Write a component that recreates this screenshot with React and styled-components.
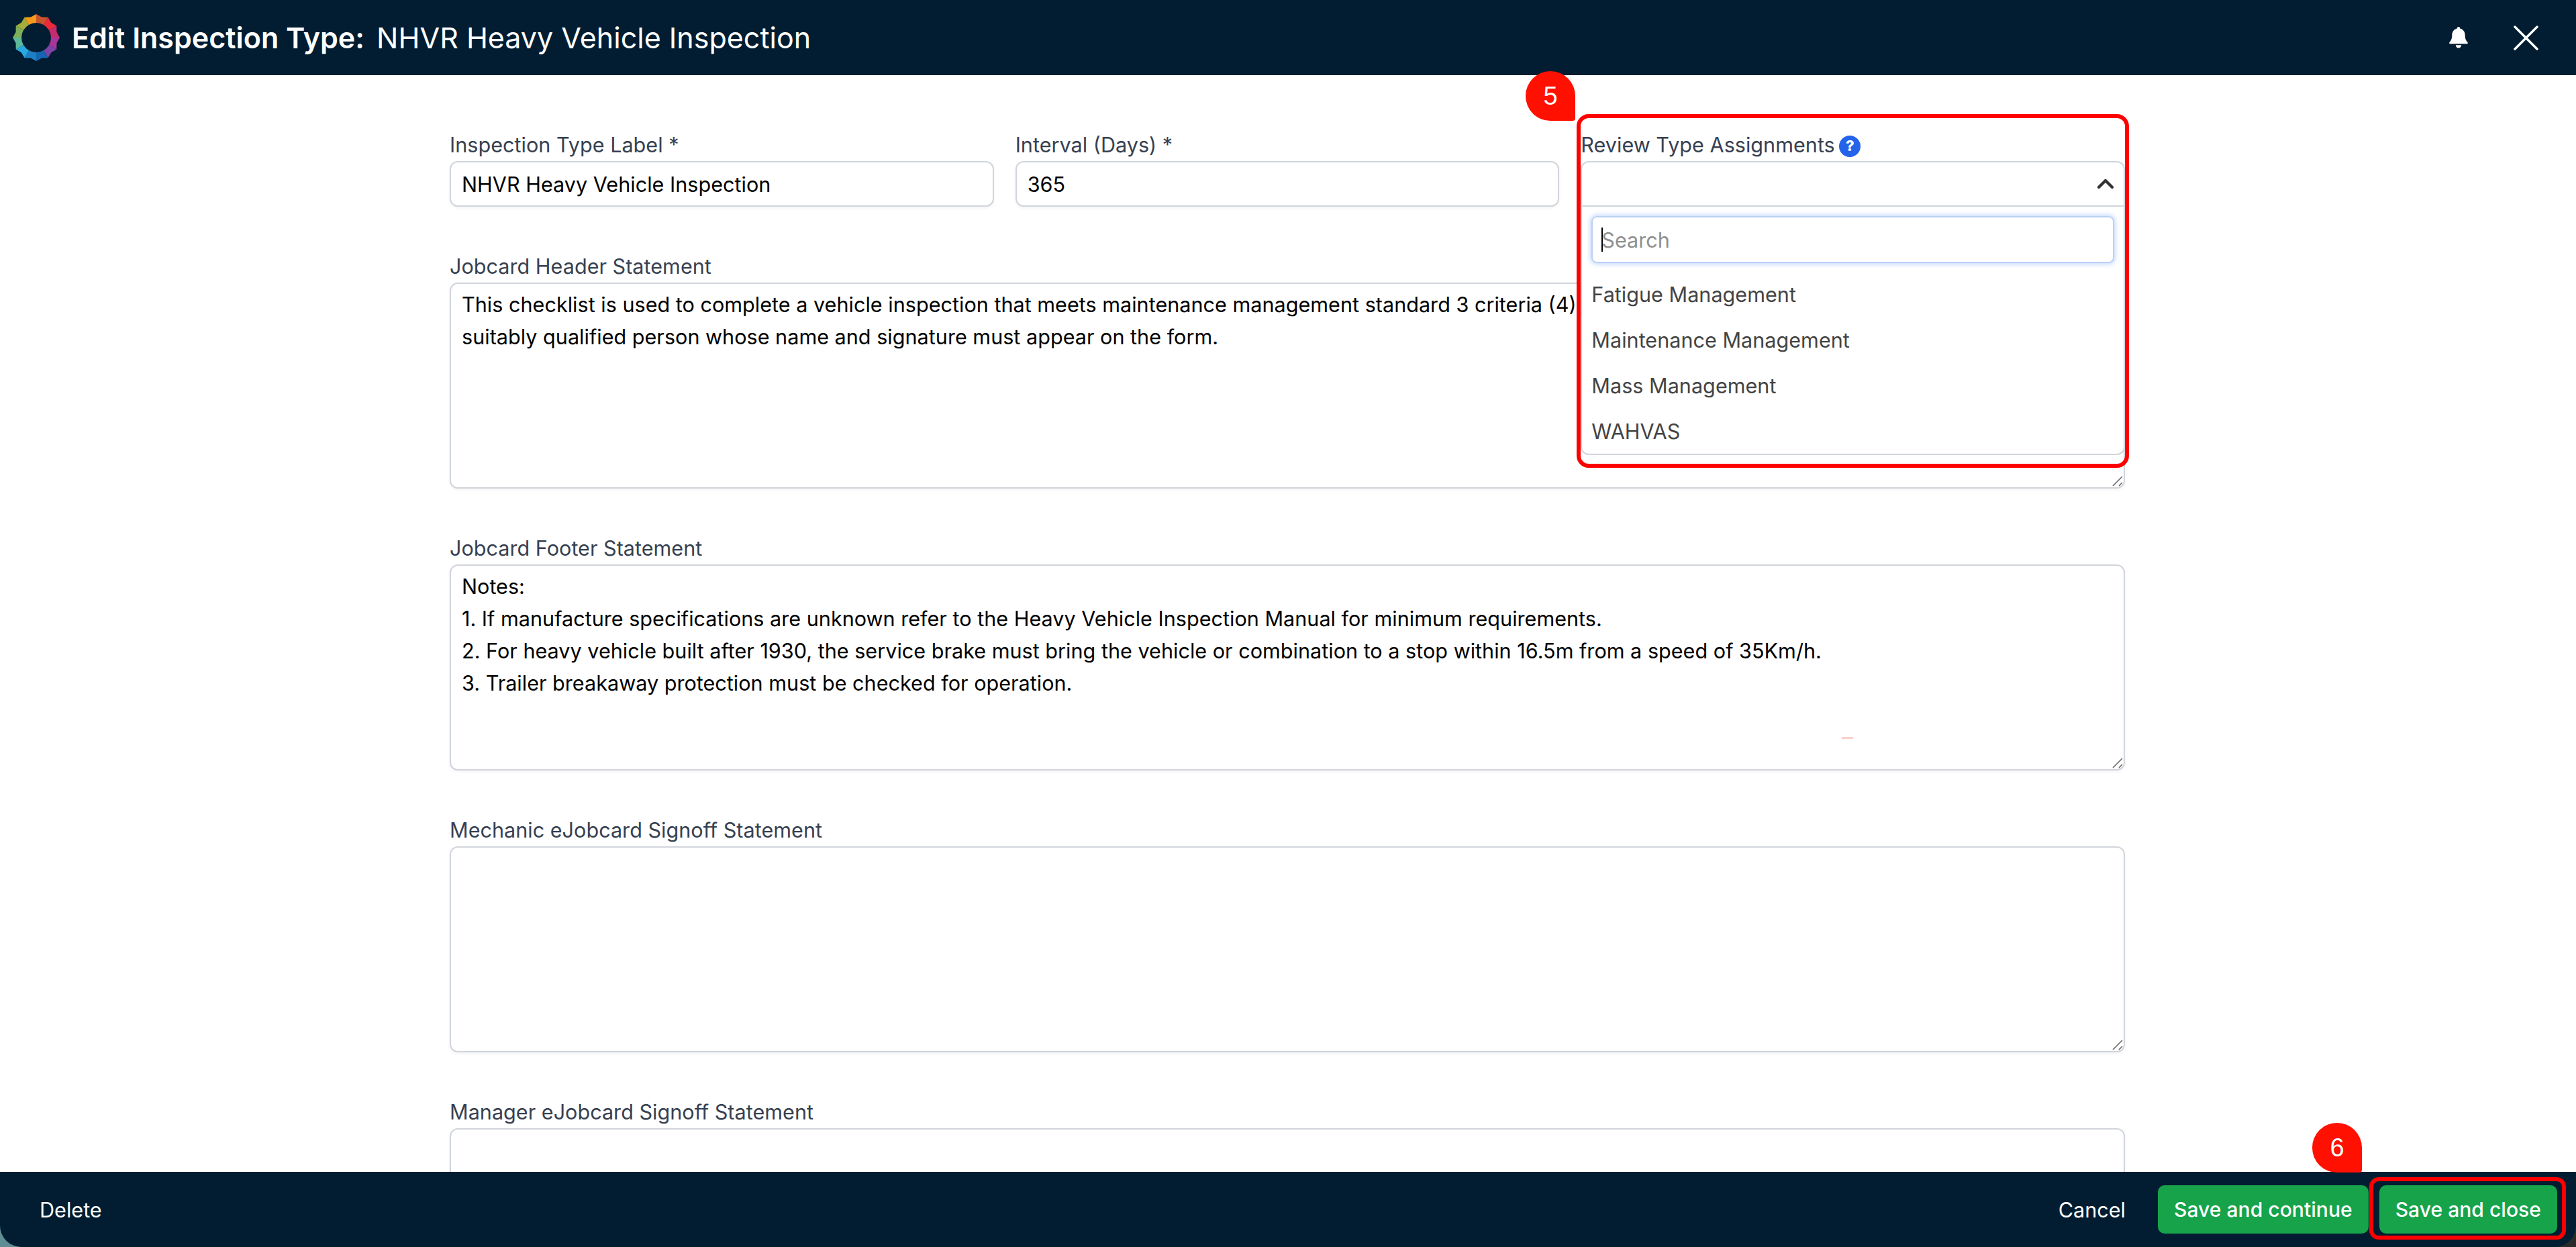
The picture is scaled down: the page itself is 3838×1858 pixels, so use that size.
import React from "react";
import styled, { createGlobalStyle } from "styled-components";
import { ChevronUp } from "lucide-react";

const FONT = `Inter, "Liberation Sans", sans-serif`;

const GlobalStyle = createGlobalStyle`
	html, body {
		margin: 0;
		padding: 0;
		height: 100%;
		background: linear-gradient(90deg, #5f8d94 0%, #2a2a2a 100%);
		font-family: ${FONT};
	}
	#root {
		height: 100%;
	}
	* {
		box-sizing: border-box;
	}
`;

const LOGO_SEGMENTS = ["#c9552f", "#ee2a3a", "#c52c6e", "#a8359a", "#7c44a6", "#1565b2", "#1f7fc4", "#2aa8e2", "#5cb89a", "#7fae5a", "#a3ad3c", "#f59a1c"];

const polar = (r, deg) => {
	const a = ((deg - 90) * Math.PI) / 180;
	return `${(35 + r * Math.cos(a)).toFixed(2)} ${(35 + r * Math.sin(a)).toFixed(2)}`;
};

const Logo = () => (
	<LogoMark viewBox="0 0 70 70">
		{LOGO_SEGMENTS.map((color, i) => {
			const start = i * 30;
			const mid = start + 15;
			const end = start + 30;
			return (
				<path
					key={color}
					fill={color}
					d={`M${polar(35, start)} L${polar(31.5, mid)} L${polar(35, end)} L${polar(22, end)} A22 22 0 0 0 ${polar(22, start)} Z`}
				/>
			);
		})}
	</LogoMark>
);

const BellIcon = () => (
	<svg width="28" height="32" viewBox="0 0 28 32" fill="#ffffff">
		<path d="M14 0c1.400 0 2.300 1 2.300 2.400 4.600 1 7.400 5 7.400 9.800 0 6.200 1.800 8.600 3.800 10.800.6.700.5 2.200-1 2.200H1.500C0 25.200-.1 23.700.5 23c2-2.200 3.800-4.600 3.800-10.800 0-4.800 2.800-8.800 7.400-9.800C11.700 1 12.600 0 14 0z" />
		<path d="M9.800 27.200h8.400c0 2.400-1.800 4.200-4.200 4.200s-4.200-1.800-4.200-4.200z" />
	</svg>
);

const CloseIcon = () => (
	<svg width="37" height="37" viewBox="0 0 37 37" stroke="#ffffff" strokeWidth="3.500" strokeLinecap="round">
		<path d="M2 2l33 33M35 2L2 35" />
	</svg>
);

const Grip = () => (
	<GripMark viewBox="0 0 16 16" stroke="#6b6b6b" strokeWidth="1.600">
		<path d="M1 15L15 1M10 15l5-5" />
	</GripMark>
);

const LongField = ({ label, value, children }) => (
	<div>
		<Label>{label}</Label>
		<AreaWrap>
			<TextArea readOnly value={value} />
			<Grip />
			{children}
		</AreaWrap>
	</div>
);

const HEADER_TEXT =
	"This checklist is used to complete a vehicle inspection that meets maintenance management standard 3 criteria (4) and must be carried out and signed by a\nsuitably qualified person whose name and signature must appear on the form.";

const FOOTER_TEXT = `Notes:
1. If manufacture specifications are unknown refer to the Heavy Vehicle Inspection Manual for minimum requirements.
2. For heavy vehicle built after 1930, the service brake must bring the vehicle or combination to a stop within 16.5m from a speed of 35Km/h.
3. Trailer breakaway protection must be checked for operation.`;

const OPTIONS = ["Fatigue Management", "Maintenance Management", "Mass Management", "WAHVAS"];

const App = () => {
	return (
		<>
			<GlobalStyle />
			<Page>
				<TopBar>
					<TitleGroup>
						<Logo />
						<Title>
							<strong>Edit Inspection Type:</strong> NHVR Heavy Vehicle Inspection
						</Title>
					</TitleGroup>
					<TopActions>
						<BellIcon />
						<CloseIcon />
					</TopActions>
				</TopBar>

				<Body>
					<Form>
						<TopRow>
							<div>
								<Label>Inspection Type Label *</Label>
								<Input readOnly value="NHVR Heavy Vehicle Inspection" />
							</div>
							<div>
								<Label>Interval (Days) *</Label>
								<Input readOnly value="365" />
							</div>
							<SelectField>
								<Label>
									Review Type Assignments <HelpDot>?</HelpDot>
								</Label>
								<SelectBox>
									<ChevronUp size={40} strokeWidth={2.6} color="#333333" />
								</SelectBox>
								<Dropdown>
									<SearchBox>
										<Caret />
										Search
									</SearchBox>
									{OPTIONS.map((option) => (
										<Option key={option}>{option}</Option>
									))}
								</Dropdown>
								<Callout />
							</SelectField>
						</TopRow>
						<LongField label="Jobcard Header Statement" value={HEADER_TEXT} />
						<LongField label="Jobcard Footer Statement" value={FOOTER_TEXT}>
							<Speck />
						</LongField>
						<LongField label="Mechanic eJobcard Signoff Statement" value="" />
						<LongField label="Manager eJobcard Signoff Statement" value="" />
					</Form>
				</Body>

				<BottomBar>
					<TextButton>Delete</TextButton>
					<BottomActions>
						<TextButton>Cancel</TextButton>
						<SaveButton>Save and continue</SaveButton>
						<SaveClose>
							<SaveButton>Save and close</SaveButton>
						</SaveClose>
					</BottomActions>
				</BottomBar>

				<Badge $top={106} $left={2273}>5</Badge>
				<Badge $top={1673} $left={3445}>6</Badge>
			</Page>
		</>
	);
};

const Page = styled.div`
	position: relative;
	height: 1858px;
	display: flex;
	flex-direction: column;
	overflow: hidden;
	border-radius: 0 0 32px 32px;
`;

const TopBar = styled.header`
	height: 112px;
	flex: none;
	background: #021d31;
	display: flex;
	align-items: center;
	justify-content: space-between;
	padding: 0 56px 0 19px;
`;

const TitleGroup = styled.div`
	display: flex;
	align-items: center;
	gap: 18px;
`;

const LogoMark = styled.svg`
	width: 70px;
	height: 70px;
	flex: none;
`;

const Title = styled.h1`
	margin: 0;
	font-size: 43px;
	font-weight: 400;
	color: #ffffff;
	strong {
		font-weight: 600;
		margin-right: 6px;
	}
`;

const TopActions = styled.div`
	display: flex;
	align-items: center;
	gap: 68px;
`;

const Body = styled.main`
	flex: 1;
	min-height: 0;
	overflow: hidden;
	background: #ffffff;
	padding: 85px 672px 0 670px;
`;

const Form = styled.div`
	display: flex;
	flex-direction: column;
	gap: 70px;
`;

const TopRow = styled.div`
	display: grid;
	grid-template-columns: repeat(3, 1fr);
	gap: 32px;
`;

const Label = styled.label`
	display: block;
	height: 43px;
	line-height: 37px;
	font-size: 30.600px;
	color: #374151;
	white-space: nowrap;
`;

const Input = styled.input`
	display: block;
	width: 100%;
	height: 68px;
	padding: 0 16px;
	border: 2.500px solid #d1d5db;
	border-radius: 12px;
	box-shadow: 0 2px 4px rgba(0, 0, 0, 0.05);
	font-family: ${FONT};
	font-size: 30.600px;
	color: #000000;
	outline: none;
`;

const AreaWrap = styled.div`
	position: relative;
	height: 307px;
`;

const TextArea = styled.textarea`
	display: block;
	width: 100%;
	height: 100%;
	resize: none;
	padding: 7px 16px;
	border: 2.500px solid #d1d5db;
	border-radius: 12px;
	box-shadow: 0 2px 4px rgba(0, 0, 0, 0.05);
	font-family: ${FONT};
	font-size: 30.600px;
	line-height: 48px;
	color: #000000;
	outline: none;
	overflow: hidden;
`;

const GripMark = styled.svg`
	position: absolute;
	right: 3px;
	bottom: 3px;
	width: 16px;
	height: 16px;
`;

const Speck = styled.span`
	position: absolute;
	left: 2074px;
	top: 257px;
	width: 17px;
	height: 3px;
	background: #fbd0d0;
`;

const SelectField = styled.div`
	position: relative;
`;

const HelpDot = styled.span`
	display: inline-flex;
	align-items: center;
	justify-content: center;
	width: 32px;
	height: 32px;
	margin-left: -2px;
	border-radius: 50%;
	background: #2563eb;
	color: #ffffff;
	font-size: 22px;
	font-weight: 800;
	vertical-align: 2px;
`;

const SelectBox = styled.div`
	height: 68px;
	display: flex;
	align-items: center;
	justify-content: flex-end;
	padding-right: 7px;
	border: 2.500px solid #d1d5db;
	border-radius: 12px 12px 0 0;
	background: #ffffff;
`;

const Dropdown = styled.div`
	position: absolute;
	z-index: 2;
	top: 111px;
	left: 0;
	right: 0;
	height: 370px;
	padding: 14px 14px 0;
	background: #ffffff;
	border: 2.500px solid #d1d5db;
	border-top: none;
	border-radius: 0 0 12px 12px;
`;

const SearchBox = styled.div`
	height: 70px;
	display: flex;
	align-items: center;
	padding-left: 13px;
	margin-bottom: 12px;
	border: 2.500px solid #bcd0f5;
	border-radius: 8px;
	box-shadow: 0 0 6px 2px rgba(66, 133, 244, 0.3);
	font-size: 30.600px;
	color: #8f8f8f;
`;

const Caret = styled.span`
	width: 2px;
	height: 36px;
	margin-right: -2px;
	background: #000000;
`;

const Option = styled.div`
	height: 68px;
	display: flex;
	align-items: center;
	font-size: 30.600px;
	color: #444444;
`;

const Callout = styled.div`
	position: absolute;
	z-index: 3;
	top: -27px;
	left: -6px;
	right: -6px;
	height: 527px;
	border: 6px solid #ff0000;
	border-radius: 18px;
	pointer-events: none;
`;

const BottomBar = styled.footer`
	height: 112px;
	flex: none;
	background: #021d31;
	display: flex;
	align-items: center;
	justify-content: space-between;
	padding: 0 28px 0 59px;
`;

const BottomActions = styled.div`
	display: flex;
	align-items: center;
	gap: 48px;
`;

const TextButton = styled.span`
	font-size: 30.600px;
	color: #ffffff;
`;

const SaveButton = styled.span`
	display: inline-flex;
	align-items: center;
	height: 72px;
	padding: 0 24px;
	border-radius: 10px;
	background: #16a34a;
	color: #ffffff;
	font-size: 30.100px;
	font-weight: 500;
`;

const SaveClose = styled.div`
	position: relative;
	margin-left: -32px;
	&::after {
		content: "";
		position: absolute;
		top: -12px;
		bottom: -9px;
		left: -15px;
		right: -13px;
		border: 6px solid #ff0000;
		border-radius: 14px;
	}
`;

const Badge = styled.div`
	position: absolute;
	z-index: 5;
	top: ${(props) => props.$top}px;
	left: ${(props) => props.$left}px;
	width: 74px;
	height: 74px;
	display: flex;
	align-items: center;
	justify-content: center;
	background: #ff1000;
	border-radius: 50% 50% 4px 50%;
	color: #ffffff;
	font-family: "Liberation Sans", sans-serif;
	font-size: 38px;
`;

export default App;
